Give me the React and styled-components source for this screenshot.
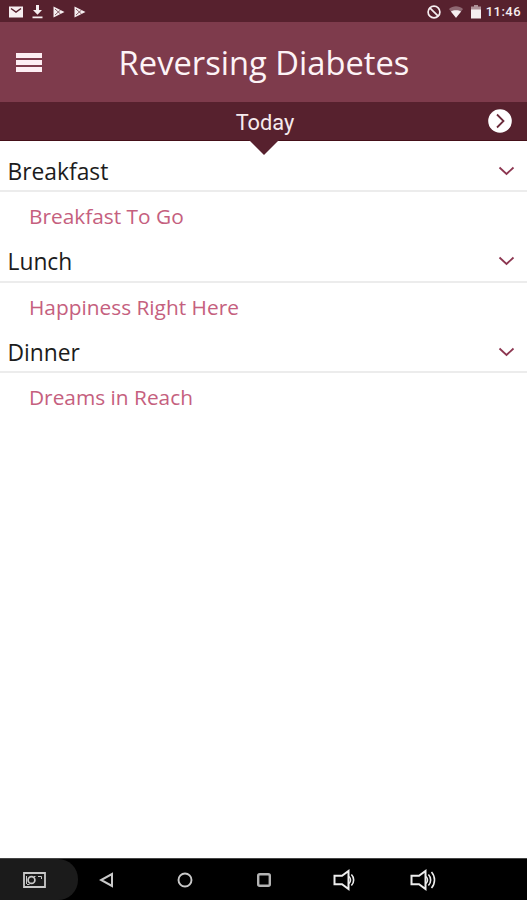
import React from "react";
import styled, { createGlobalStyle } from "styled-components";

const GlobalStyle = createGlobalStyle`
  * {
    box-sizing: border-box;
  }
  body {
    margin: 0;
    background: #fff;
    font-family: "Open Sans", "Noto Sans", sans-serif;
  }
`;

const Screen = styled.div`
  width: 100%;
  height: 100vh;
  display: flex;
  flex-direction: column;
  overflow: hidden;
  background: #fff;
`;

const StatusBar = styled.div`
  height: 22px;
  flex: none;
  display: flex;
  justify-content: space-between;
  align-items: center;
  padding: 2px 6px 0 9px;
  background: #57212e;
  color: #f6eef0;
`;

const StatusGroup = styled.div`
  display: flex;
  align-items: center;
  gap: ${(props) => props.$gap};
  svg {
    display: block;
  }
`;

const Clock = styled.span`
  font-family: Roboto, sans-serif;
  font-size: 13px;
  font-weight: 500;
  line-height: 16px;
  letter-spacing: 0.45px;
  margin-left: -3px;
`;

const Header = styled.header`
  height: 80px;
  flex: none;
  display: grid;
  grid-template-columns: 60px 1fr 60px;
  align-items: center;
  background: #7e3b4c;
`;

const MenuButton = styled.button`
  width: 26px;
  height: 19px;
  margin-left: 16px;
  padding: 0;
  border: none;
  background: none;
  display: flex;
  flex-direction: column;
  justify-content: space-between;
`;

const MenuLine = styled.span`
  height: 5px;
  background: #fdeef3;
`;

const Title = styled.h1`
  margin: 0;
  padding: 2px 0 0 1px;
  font-size: 32.7px;
  font-weight: 400;
  line-height: 46px;
  color: #fdf3f6;
  text-align: center;
  white-space: nowrap;
`;

const DayBar = styled.div`
  position: relative;
  height: 39px;
  flex: none;
  display: grid;
  grid-template-columns: 60px 1fr 60px;
  align-items: center;
  background: #57212e;
  border-bottom: 1px solid #451019;
`;

const DayLabel = styled.span`
  grid-column: 2;
  font-family: Roboto, sans-serif;
  font-size: 21.8px;
  line-height: 28px;
  color: #f6eaed;
  text-align: center;
  padding: 3px 0 0 3px;
`;

const DayPointer = styled.span`
  position: absolute;
  left: 50%;
  top: 38px;
  margin-left: -15px;
  border: 15px solid transparent;
  border-top-color: #57212e;
  border-bottom: none;
`;

const NextButton = styled.button`
  width: 24px;
  height: 24px;
  padding: 0;
  border: none;
  background: none;
  justify-self: end;
  margin-right: 15px;
  svg {
    display: block;
  }
`;

const MealList = styled.main`
  flex: 1;
`;

const Meal = styled.section`
  height: 90.5px;
`;

const MealHeader = styled.div`
  height: 51px;
  display: flex;
  justify-content: space-between;
  align-items: center;
  padding: 10px 12px 0 8px;
  border-bottom: 2px solid #ececec;
`;

const MealName = styled.h2`
  margin: 0 0 0 -0.5px;
  padding-top: 2px;
  font-size: 22.8px;
  font-weight: 400;
  line-height: 30px;
  color: #1c1c1c;
`;

const Recipe = styled.p`
  margin: 0;
  padding: 10px 0 0 29px;
  font-size: 20.85px;
  line-height: 28px;
  color: #c5607e;
`;

const NavBar = styled.nav`
  height: 42px;
  flex: none;
  display: flex;
  align-items: center;
  background: #000;
  border-top: 1px solid #444;
`;

const NavItem = styled.button`
  width: ${(props) => props.$width};
  height: 100%;
  padding: 0;
  border: none;
  border-radius: ${(props) => (props.$active ? "0 20px 20px 0" : "0")};
  background: ${(props) => (props.$active ? "#1b1b1b" : "none")};
  display: flex;
  justify-content: center;
  align-items: center;
  color: #c9c9c9;
  padding: ${(props) => (props.$active ? "0 9px 0 0" : "0")};
`;

const meals = [
  { name: "Breakfast", recipe: "Breakfast To Go" },
  { name: "Lunch", recipe: "Happiness Right Here" },
  { name: "Dinner", recipe: "Dreams in Reach" },
];

const MailIcon = () => (
  <svg width="14" height="12" viewBox="0 0 14 12">
    <path d="M0 0.5h14v11H0z" fill="currentColor" />
    <path d="M2 2.5l5 3.6 5-3.6" fill="none" stroke="#57212e" strokeWidth="1.5" />
  </svg>
);

const DownloadIcon = () => (
  <svg width="12" height="14" viewBox="0 0 12 14" fill="currentColor">
    <path d="M4 0h3v5h3L5.5 9.8 1 5h3zM0.5 11.5h10v1.8h-10z" />
  </svg>
);

const PlayStoreIcon = () => (
  <svg width="12" height="12" viewBox="0 0 12 12">
    <path d="M0.5 0.5L11.5 6 0.5 11.5z" fill="currentColor" />
    <path d="M2 3l5.5 5M2 9l5.5-5" fill="none" stroke="#57212e" strokeWidth="0.7" />
  </svg>
);

const BlockedIcon = () => (
  <svg width="14" height="14" viewBox="0 0 14 14" fill="none" stroke="currentColor" strokeWidth="1.7">
    <circle cx="7" cy="7" r="5.9" />
    <path d="M2.8 2.8l8.4 8.4" />
  </svg>
);

const WifiIcon = () => (
  <svg width="14" height="12" viewBox="0 0 14 12" fill="currentColor">
    <path d="M0 3C4-0.7 10-0.7 14 3L7 12z" opacity="0.35" />
    <path d="M1.9 5.4C4.5 3.8 9.5 3.8 12.1 5.4L7 11.8z" />
  </svg>
);

const BatteryIcon = () => (
  <svg width="10" height="14" viewBox="0 0 10 14" fill="currentColor">
    <path d="M0 1.5h3V0h4v1.5h3V5H0z" opacity="0.55" />
    <path d="M0 4.5h10v9H0z" />
  </svg>
);

const ChevronDown = () => (
  <svg width="17" height="10" viewBox="0 0 17 10" fill="none" stroke="#8c3650" strokeWidth="1.8">
    <path d="M1.5 1.5l7 6.5 7-6.5" />
  </svg>
);

const NextIcon = () => (
  <svg width="24" height="24" viewBox="0 0 24 24">
    <circle cx="12" cy="12" r="11.8" fill="#fff" />
    <path d="M9 5.5l6.5 6.5L9 18.5" fill="none" stroke="#6b2b3b" strokeWidth="1.8" />
  </svg>
);

const ScreenshotIcon = () => (
  <svg width="23" height="16" viewBox="0 0 23 16" fill="none" stroke="currentColor">
    <path d="M1 1h21v14H1z" strokeWidth="1.8" />
    <circle cx="8.5" cy="8" r="3.4" strokeWidth="1.7" />
    <path d="M3.5 4v8M15 4.5h3.5V7M4 12.5h2.5M11 4.5h1.5" />
  </svg>
);

const BackIcon = () => (
  <svg width="15" height="16" viewBox="0 0 15 16" fill="none" stroke="currentColor" strokeWidth="2">
    <path d="M13 2v12L2 8z" />
  </svg>
);

const HomeIcon = () => (
  <svg width="16" height="16" viewBox="0 0 16 16" fill="none" stroke="currentColor" strokeWidth="1.9">
    <circle cx="8" cy="8" r="6.5" />
  </svg>
);

const RecentIcon = () => (
  <svg width="14" height="14" viewBox="0 0 14 14" fill="none" stroke="#b4b4b4" strokeWidth="2.4">
    <rect x="1.2" y="1.2" width="11.6" height="11.6" rx="1.5" />
  </svg>
);

const VolumeIcon = ({ loud }) => (
  <svg width={loud ? 26 : 22} height="22" viewBox={loud ? "0 0 26 22" : "0 0 22 22"} fill="none" stroke="#ededed" strokeWidth="2">
    <path d="M1.5 6.8H9L15.5 2v18L9 15.2H1.5z" />
    <path d="M16 7.5c2 2 2 5 0 7M18.4 5.5c3 3 3 8 0 11" strokeWidth="1.6" />
    {loud && <path d="M21.5 3c4 4.5 4 11.5 0 16" strokeWidth="1.6" />}
  </svg>
);

export default function App() {
  return (
    <Screen>
      <GlobalStyle />
      <StatusBar>
        <StatusGroup $gap="9px">
          <MailIcon />
          <DownloadIcon />
          <PlayStoreIcon />
          <PlayStoreIcon />
        </StatusGroup>
        <StatusGroup $gap="8px">
          <BlockedIcon />
          <WifiIcon />
          <BatteryIcon />
          <Clock>11:46</Clock>
        </StatusGroup>
      </StatusBar>
      <Header>
        <MenuButton aria-label="Menu">
          <MenuLine />
          <MenuLine />
          <MenuLine />
        </MenuButton>
        <Title>Reversing Diabetes</Title>
      </Header>
      <DayBar>
        <DayLabel>Today</DayLabel>
        <NextButton aria-label="Next day">
          <NextIcon />
        </NextButton>
        <DayPointer />
      </DayBar>
      <MealList>
        {meals.map((meal) => (
          <Meal key={meal.name}>
            <MealHeader>
              <MealName>{meal.name}</MealName>
              <ChevronDown />
            </MealHeader>
            <Recipe>{meal.recipe}</Recipe>
          </Meal>
        ))}
      </MealList>
      <NavBar>
        <NavItem $width="78px" $active aria-label="Screenshot">
          <ScreenshotIcon />
        </NavItem>
        <NavItem $width="56px" aria-label="Back">
          <BackIcon />
        </NavItem>
        <NavItem $width="102px" aria-label="Home">
          <HomeIcon />
        </NavItem>
        <NavItem $width="56px" aria-label="Recent apps">
          <RecentIcon />
        </NavItem>
        <NavItem $width="103px" aria-label="Volume down">
          <VolumeIcon />
        </NavItem>
        <NavItem $width="55px" aria-label="Volume up">
          <VolumeIcon loud />
        </NavItem>
      </NavBar>
    </Screen>
  );
}
